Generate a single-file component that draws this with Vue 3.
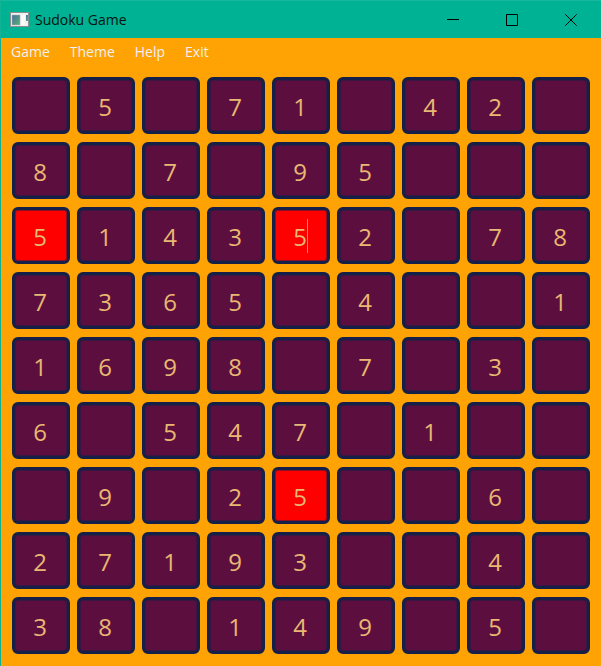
<script setup>
import { reactive } from 'vue'

const menus = ['Game', 'Theme', 'Help', 'Exit']

const rows = [
  ' 5 71 42 ',
  '8 7 95   ',
  '514352 78',
  '7365 4  1',
  '1698 7 3 ',
  '6 547 1  ',
  ' 9 25  6 ',
  '27193  4 ',
  '38 149 5 ',
]

const conflicts = ['2-0', '2-4', '6-4']
const active = '2-4'

const cells = reactive(
  rows.flatMap((row, r) =>
    [...row].map((digit, c) => ({
      key: `${r}-${c}`,
      label: `Row ${r + 1}, column ${c + 1}`,
      value: digit.trim(),
      conflict: conflicts.includes(`${r}-${c}`),
      active: active === `${r}-${c}`,
    }))
  )
)
</script>

<template>
  <div class="window">
    <header class="titlebar">
      <svg class="app-icon" width="20" height="16" viewBox="0 0 20 16" aria-hidden="true">
        <defs>
          <linearGradient id="pane" x1="0" y1="0" x2="1" y2="1">
            <stop offset="0" stop-color="#4a6f9c" />
            <stop offset="1" stop-color="#58b078" />
          </linearGradient>
        </defs>
        <rect x="0.5" y="0.5" width="18" height="14" fill="#f1f1f1" stroke="#8b8f8e" />
        <rect x="2" y="3" width="8" height="10" fill="url(#pane)" stroke="#a5b5b5" stroke-width="0.5" />
        <rect x="11" y="3" width="4" height="10" fill="#fafafa" />
        <rect x="16" y="3" width="2" height="6" fill="url(#pane)" />
      </svg>
      <h1 class="title">Sudoku Game</h1>
      <div class="controls">
        <button type="button" aria-label="Minimize">
          <svg width="12" height="12" viewBox="0 0 12 12"><path d="M0 5.500H12" /></svg>
        </button>
        <button type="button" aria-label="Maximize">
          <svg width="12" height="12" viewBox="0 0 12 12"><path d="M0.5 0.5H11.500V11.500H0.5Z" /></svg>
        </button>
        <button type="button" aria-label="Close">
          <svg width="12" height="12" viewBox="0 0 12 12"><path d="M0.300 0.300L11.700 11.700M11.700 0.300L0.300 11.700" /></svg>
        </button>
      </div>
    </header>

    <nav class="menubar">
      <button v-for="menu in menus" :key="menu" type="button">{{ menu }}</button>
    </nav>

    <main class="board">
      <div v-for="cell in cells" :key="cell.key" class="cell" :class="{ conflict: cell.conflict }">
        <input v-model="cell.value" type="text" maxlength="1" :aria-label="cell.label" />
        <span v-if="cell.active" class="caret"></span>
      </div>
    </main>
  </div>
</template>

<style>
body {
  margin: 0;
  background: #ffa304;
}
</style>

<style scoped>
.window {
  box-sizing: border-box;
  min-height: 100vh;
  border-left: 1px solid #12b295;
  background: #ffa304;
  font-family: "Open Sans", "Noto Sans", sans-serif;
}

.titlebar {
  box-sizing: border-box;
  display: flex;
  align-items: center;
  height: 38px;
  padding-left: 9px;
  border-top: 1px solid #17b89c;
  background: #00b294;
}

.app-icon {
  flex: none;
}

.title {
  flex: 1;
  margin: 0 0 0 5px;
  color: #05120f;
  font-size: 14px;
  font-weight: 400;
  line-height: 20px;
}

.controls {
  display: flex;
  height: 100%;
}

.controls button {
  display: flex;
  align-items: center;
  justify-content: center;
  width: 59px;
  padding: 0 1px 0 0;
  border: 0;
  background: none;
}

.controls svg {
  fill: none;
  stroke: #000;
  stroke-width: 1;
}

.menubar {
  display: flex;
  gap: 20px;
  padding: 4px 10px 5px;
}

.menubar button {
  padding: 0;
  border: 0;
  background: none;
  color: #efeff4;
  font-family: inherit;
  font-size: 14px;
  line-height: 20px;
}

.board {
  display: grid;
  grid-template-columns: repeat(9, 1fr);
  gap: 8px 7px;
  padding: 10px 11px 12px;
}

.cell {
  position: relative;
  box-sizing: border-box;
  height: 57px;
  border: 3px solid #161f48;
  border-radius: 6px;
  background: #161f48;
}

.cell input {
  display: block;
  box-sizing: border-box;
  width: 100%;
  height: 100%;
  padding: 1px 2px 0 0;
  border: 0;
  border-radius: 3px;
  outline: none;
  background: #5c0f3e;
  box-shadow: inset 0 0 0 1px rgba(22, 31, 72, 0.5);
  color: #e9b872;
  font-family: inherit;
  font-size: 24px;
  text-align: center;
}

.conflict input {
  background: #ff0000;
}

.caret {
  position: absolute;
  top: 9px;
  left: 32px;
  width: 1px;
  height: 34px;
  background: #7fb0a8;
}
</style>
